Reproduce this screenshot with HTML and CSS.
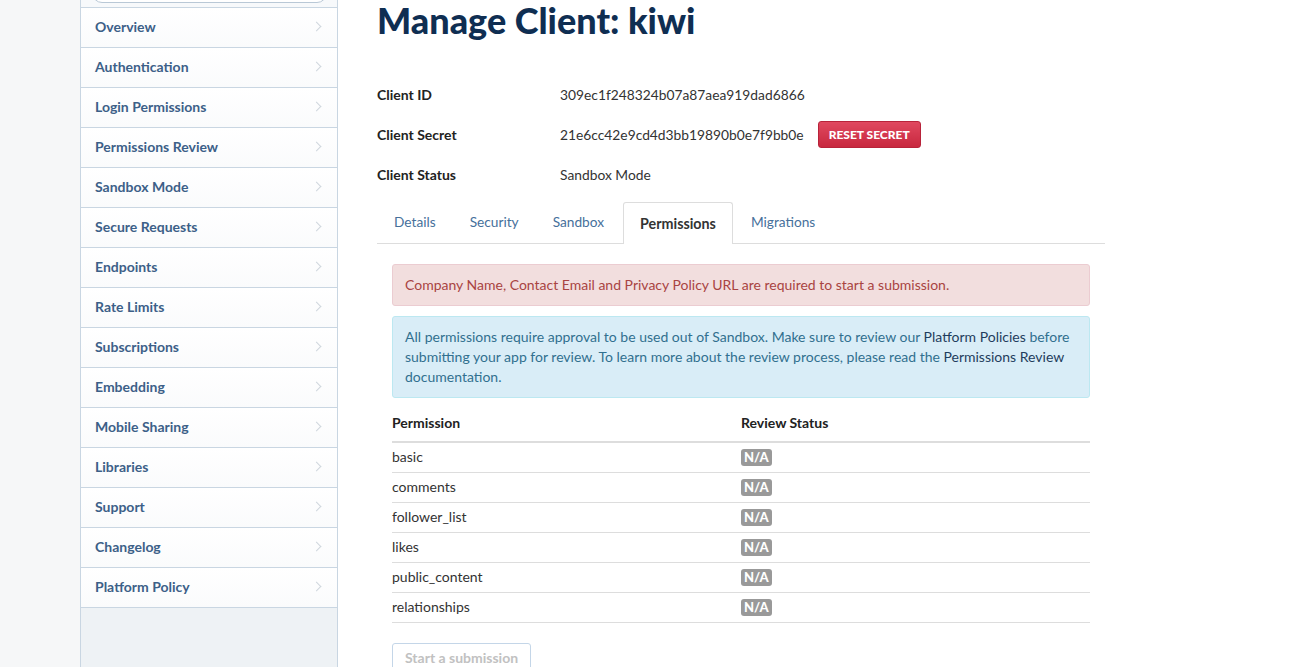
FILE: index.html
```html
<!DOCTYPE html>
<html>
<head>
<meta charset="utf-8">
<link rel="stylesheet" href="styles.css">
</head>
<body>
<div class="page">
  <div class="gutter"></div>
  <aside class="sidebar">
    <div class="search-wrap"><div class="search"></div></div>
    <nav class="nav">
      <a class="nav-item">Overview<span class="chev"></span></a>
      <a class="nav-item">Authentication<span class="chev"></span></a>
      <a class="nav-item">Login Permissions<span class="chev"></span></a>
      <a class="nav-item">Permissions Review<span class="chev"></span></a>
      <a class="nav-item">Sandbox Mode<span class="chev"></span></a>
      <a class="nav-item">Secure Requests<span class="chev"></span></a>
      <a class="nav-item">Endpoints<span class="chev"></span></a>
      <a class="nav-item">Rate Limits<span class="chev"></span></a>
      <a class="nav-item">Subscriptions<span class="chev"></span></a>
      <a class="nav-item">Embedding<span class="chev"></span></a>
      <a class="nav-item">Mobile Sharing<span class="chev"></span></a>
      <a class="nav-item">Libraries<span class="chev"></span></a>
      <a class="nav-item">Support<span class="chev"></span></a>
      <a class="nav-item">Changelog<span class="chev"></span></a>
      <a class="nav-item">Platform Policy<span class="chev"></span></a>
    </nav>
  </aside>
  <main class="main">
    <h1 class="title">Manage Client: kiwi</h1>
    <div class="info">
      <div class="info-row"><div class="info-label">Client ID</div><div class="info-value">309ec1f248324b07a87aea919dad6866</div></div>
      <div class="info-row"><div class="info-label">Client Secret</div><div class="info-value">21e6cc42e9cd4d3bb19890b0e7f9bb0e</div><button class="btn-danger">RESET SECRET</button></div>
      <div class="info-row"><div class="info-label">Client Status</div><div class="info-value">Sandbox Mode</div></div>
    </div>
    <div class="tabs">
      <a class="tab">Details</a>
      <a class="tab">Security</a>
      <a class="tab">Sandbox</a>
      <a class="tab active">Permissions</a>
      <a class="tab">Migrations</a>
    </div>
    <div class="panel">
      <div class="alert alert-danger">Company Name, Contact Email and Privacy Policy URL are required to start a submission.</div>
      <div class="alert alert-info">All permissions require approval to be used out of Sandbox. Make sure to review our <a class="alert-link">Platform Policies</a> before submitting your app for review. To learn more about the review process, please read the <a class="alert-link">Permissions Review</a> documentation.</div>
      <table class="perm-table">
        <thead>
          <tr><th class="col-perm">Permission</th><th>Review Status</th></tr>
        </thead>
        <tbody>
          <tr><td>basic</td><td><span class="label">N/A</span></td></tr>
          <tr><td>comments</td><td><span class="label">N/A</span></td></tr>
          <tr><td>follower_list</td><td><span class="label">N/A</span></td></tr>
          <tr><td>likes</td><td><span class="label">N/A</span></td></tr>
          <tr><td>public_content</td><td><span class="label">N/A</span></td></tr>
          <tr><td>relationships</td><td><span class="label">N/A</span></td></tr>
        </tbody>
      </table>
      <button class="btn-submit" disabled>Start a submission</button>
    </div>
  </main>
</div>
</body>
</html>
```
FILE: styles.css
```css
* { box-sizing: border-box; }
html, body { margin: 0; padding: 0; height: 100%; overflow: hidden; }
body {
  font-family: "Lato", "Open Sans", Arial, sans-serif;
  font-size: 14px;
  color: #333;
  background: #fff;
}
.page { display: flex; height: 667px; }
.gutter { width: 80px; flex: none; background: #f6f7f8; }
.sidebar {
  width: 258px; flex: none;
  background: #eef2f5;
  border-left: 1px solid #c9d6e2;
  border-right: 1px solid #c9d6e2;
  display: flex; flex-direction: column;
}
.search-wrap { height: 7px; overflow: hidden; background: #f7f9fb; }
.search {
  height: 20px; margin: -17px 10px 0 11px;
  border: 1px solid #b9c8d6; border-radius: 10px; background: #fff;
}
.nav { display: flex; flex-direction: column; border-top: 1px solid #c9d6e2; }
.nav-item {
  height: 40px; display: flex; align-items: center; justify-content: space-between;
  padding: 0 15px 2px 14px;
  background: linear-gradient(#ffffff, #fafbfc);
  border-bottom: 1px solid #c9d6e2;
  color: #3c6088; font-weight: 700; font-size: 14px;
  text-decoration: none;
}
.chev {
  width: 7px; height: 7px;
  border-top: 1px solid #cfd6dd; border-right: 1px solid #cfd6dd;
  transform: rotate(45deg);
  margin-right: 2px;
}
.main { flex: 1; padding: 0 0 0 39px; }
.title {
  margin: 0; padding-top: 2px; font-size: 36px; font-weight: 900; color: #0f2e52;
  line-height: 36px;
}
.info { margin-top: 36px; width: 728px; }
.info-row { display: flex; align-items: center; height: 40px; }
.info-label { width: 183px; font-weight: 700; font-size: 14px; color: #222; }
.info-value { font-size: 13.8px; color: #333; }
.btn-danger {
  margin-left: 14px; height: 27px; padding: 0 10px;
  background: linear-gradient(#e0485f, #c8283f);
  border: 1px solid #b8233a; border-radius: 3px;
  color: #fff; font-family: inherit; font-size: 12px; font-weight: 900;
}
.tabs {
  display: flex; width: 728px; margin-top: 8px;
  border-bottom: 1px solid #dddddd; height: 42px;
}
.tab {
  padding: 0 16px 3px; display: flex; align-items: center;
  color: #46709b; font-size: 13.7px; height: 41px;
  border: 1px solid transparent; border-bottom: none; border-radius: 3px 3px 0 0;
}
.tab.active {
  background: #fff; border-color: #dddddd; color: #333; font-weight: 700;
  font-size: 14.3px; height: 42px; padding-bottom: 1px; margin: 0 1px 0 2px;
}
.panel { width: 728px; padding: 20px 15px 0; }
.alert {
  border: 1px solid transparent; border-radius: 3px; padding: 10px 12px;
  font-size: 14px; line-height: 20px; margin-bottom: 10px;
}
.alert-danger { background: #f2dede; border-color: #ebccd1; color: #a94442; height: 42px; }
.alert-info { background: #d9edf7; border-color: #bce8f1; color: #31708f; }
.alert-link { color: #1f3d5d; }
.perm-table { width: 100%; border-collapse: collapse; margin-top: 16px; font-size: 14px; }
.perm-table th {
  text-align: left; font-weight: 700; color: #222; height: 28px; padding: 0;
  line-height: 18px; border-bottom: 2px solid #dddddd; vertical-align: top;
}
.perm-table .col-perm { width: 349px; }
.perm-table td { height: 30px; padding: 0 0 1px; border-bottom: 1px solid #dddddd; color: #333; }
.label {
  display: inline-block; background: #999; color: #fff; font-weight: 900;
  font-size: 13px; line-height: 17px; padding: 0 3px; border-radius: 3px; vertical-align: middle;
}
.btn-submit {
  margin-top: 20px; height: 30px; padding: 0 12px;
  background: #fff; border: 1px solid #c4d6e8; border-radius: 3px;
  color: #c1c1c1; font-family: inherit; font-size: 14px; font-weight: 700;
}
```
